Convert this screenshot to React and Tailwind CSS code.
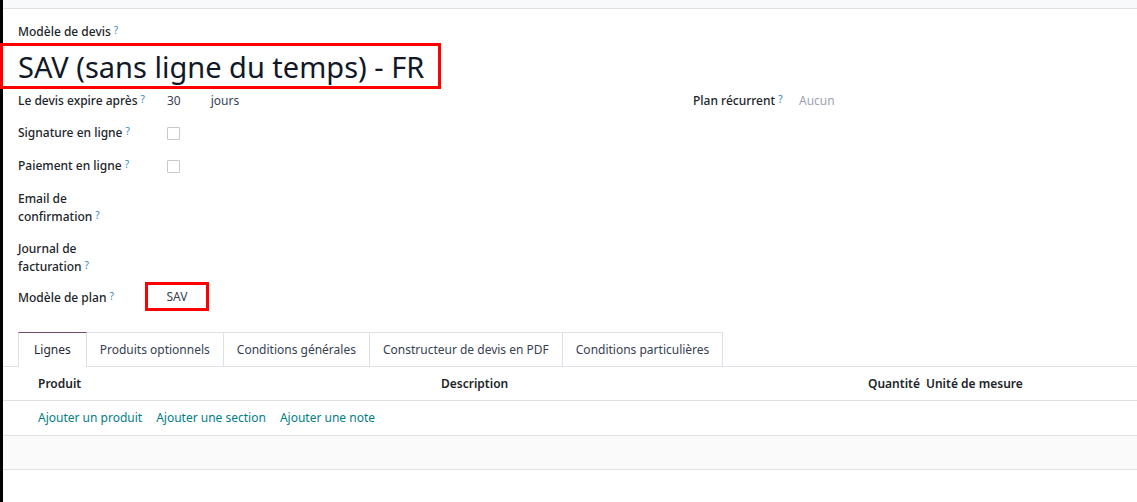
import React from "react";

const Q = () => <sup className="ml-[3px] text-[10px] font-normal text-[#2f8ac4] relative top-[-2px]">?</sup>;

function Label({ children, className = "" }) {
  return <div className={"font-medium text-[#212529] leading-[18px] " + className}>{children}</div>;
}

function Check() {
  return <div className="w-[13px] h-[13px] border border-[#c5c9cd] rounded-[1px] bg-white" />;
}

export default function App() {
  const tabs = ["Lignes", "Produits optionnels", "Conditions générales", "Constructeur de devis en PDF", "Conditions particulières"];
  return (
    <div className="w-[1137px] h-[502px] bg-white flex text-[12px] text-[#212529] overflow-hidden" style={{ fontFamily: '"Noto Sans", "Open Sans", sans-serif' }}>
      <div className="w-[3px] bg-black shrink-0" />
      <div className="flex-1 flex flex-col">
        <div className="h-[9px] bg-[#f8f9fa] border-b border-[#dee2e6]" />
        <div className="flex flex-col">
          <div className="pl-[15px] pt-[14px]">
            <Label>Modèle de devis<Q /></Label>
          </div>
          <div className="ml-[-3px] mt-[2px] w-[441px] h-[46px] border-[3px] border-[#ff0000] flex items-center pl-[15px]">
            <span className="text-[29px] leading-none text-[#111827] whitespace-nowrap">SAV (sans ligne du temps) - FR</span>
          </div>
          <div className="flex pl-[15px]">
            <div className="w-[675px] grid grid-cols-[149px_1fr]">
              <div className="h-[24px] flex items-center"><Label>Le devis expire après<Q /></Label></div>
              <div className="h-[24px] flex items-center gap-[30px] text-[#374151]"><span>30</span><span>jours</span></div>

              <div className="h-[30px] flex items-end pb-[1px]"><Label>Signature en ligne<Q /></Label></div>
              <div className="h-[30px] flex items-end pb-[3px]"><Check /></div>

              <div className="h-[33px] flex items-end pb-[1px]"><Label>Paiement en ligne<Q /></Label></div>
              <div className="h-[33px] flex items-end pb-[3px]"><Check /></div>

              <div className="pt-[14px]"><Label>Email de<br />confirmation<Q /></Label></div>
              <div />

              <div className="pt-[14px]"><Label>Journal de<br />facturation<Q /></Label></div>
              <div />

              <div className="pt-[13px]"><Label>Modèle de plan<Q /></Label></div>
              <div className="pt-[6px] ml-[-22px]">
                <div className="w-[64px] h-[29px] border-[3px] border-[#ff0000] flex items-center justify-center text-[#374151]">SAV</div>
              </div>
            </div>
            <div className="flex">
              <div className="w-[106px] h-[24px] flex items-center"><Label>Plan récurrent<Q /></Label></div>
              <div className="h-[24px] flex items-center text-[#9ca3af]">Aucun</div>
            </div>
          </div>
        </div>

        <div className="mt-[21px] flex pl-[15px] border-b border-[#dee2e6] h-[35px]">
          {tabs.map((t, i) => (
            <div
              key={t}
              className={
                "h-[35px] px-[13px] flex items-center whitespace-nowrap border-[#dee2e6] border-r border-t " +
                (i === 0 ? "border-l border-t-[#714b67] bg-white text-[#1f2937] px-[15px]" : "text-[#374151]")
              }
            >
              {t}
            </div>
          ))}
        </div>

        <div className="h-[34px] flex items-center border-b border-[#dee2e6] font-semibold text-[#212529] relative">
          <span className="absolute left-[35px]">Produit</span>
          <span className="absolute left-[438px]">Description</span>
          <span className="absolute left-[865px]">Quantité</span>
          <span className="absolute left-[923px]">Unité de mesure</span>
        </div>
        <div className="h-[35px] flex items-center gap-[14px] pl-[35px] border-b border-[#dee2e6] text-[#017e84]">
          <span>Ajouter un produit</span>
          <span>Ajouter une section</span>
          <span>Ajouter une note</span>
        </div>
        <div className="h-[34px] bg-[#fafafa] border-b border-[#dee2e6]" />
      </div>
    </div>
  );
}
